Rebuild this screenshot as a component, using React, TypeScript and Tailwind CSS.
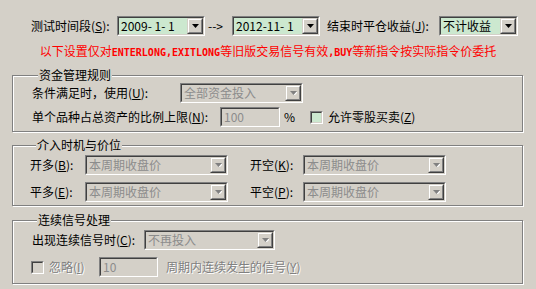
import React from 'react';

const FACE = 'bg-[#d4d0c8]';

// Win2000-style underlined access key inside parentheses
const Key: React.FC<{ k: string }> = ({ k }) => (
  <span>
    (<span className="underline underline-offset-1">{k}</span>)
  </span>
);

// half-width latin in the red notice: 6px per glyph like the bitmap font
const Asc: React.FC<{ children: React.ReactNode }> = ({ children }) => (
  <span className="font-['DejaVu_Sans_Mono',monospace] text-[10px] font-bold">{children}</span>
);

const Arrow: React.FC<{ disabled?: boolean }> = ({ disabled }) => (
  <div
    className={`flex h-full w-[16px] shrink-0 items-center justify-center border border-t-[#d4d0c8] border-l-[#d4d0c8] border-b-[#404040] border-r-[#404040] ${FACE}`}
  >
    <div className="flex h-full w-full items-center justify-center border border-t-white border-l-white border-b-[#808080] border-r-[#808080]">
      <svg width="7" height="4" viewBox="0 0 7 4">
        {disabled && <path d="M1 1h7L4.5 4.5z" fill="#fff" />}
        <path d="M0 0h7L3.5 4z" fill={disabled ? '#808080' : '#000'} />
      </svg>
    </div>
  </div>
);

const Sunken: React.FC<{ className?: string; children?: React.ReactNode; bg: string }> = ({
  className = '',
  children,
  bg,
}) => (
  <div
    className={`flex h-[20px] shrink-0 border border-t-[#808080] border-l-[#808080] border-b-white border-r-white ${className}`}
  >
    <div
      className={`flex flex-1 items-center border border-t-[#404040] border-l-[#404040] border-b-[#d4d0c8] border-r-[#d4d0c8] ${bg}`}
    >
      {children}
    </div>
  </div>
);

const Combo: React.FC<{ className?: string; value: string; disabled?: boolean }> = ({
  className,
  value,
  disabled,
}) => (
  <Sunken className={className} bg={disabled ? FACE : 'bg-[#cce8cf]'}>
    <span
      className={`flex-1 whitespace-pre pl-[2px] leading-[16px] ${disabled ? 'text-[#8c8c8c]' : 'text-black'}`}
    >
      {value}
    </span>
    <Arrow disabled={disabled} />
  </Sunken>
);

const Edit: React.FC<{ className?: string; value: string }> = ({ className, value }) => (
  <Sunken className={className} bg={FACE}>
    <span className="pl-[2px] leading-[16px] text-[#8c8c8c]">{value}</span>
  </Sunken>
);

const Check: React.FC<{ green?: boolean }> = ({ green }) => (
  <div className="h-[13px] w-[13px] shrink-0 border border-t-[#808080] border-l-[#808080] border-b-white border-r-white">
    <div
      className={`h-full w-full border border-t-[#404040] border-l-[#404040] border-b-[#d4d0c8] border-r-[#d4d0c8] ${
        green ? 'bg-[#cce8cf]' : FACE
      }`}
    />
  </div>
);

const Group: React.FC<{ title: string; className?: string; children: React.ReactNode }> = ({
  title,
  className = '',
  children,
}) => (
  <fieldset
    className={`mx-[12px] w-[511px] border border-[#808080] shadow-[1px_1px_0_#fff,inset_1px_1px_0_#fff] ${className}`}
  >
    <legend className={`ml-[6px] px-[1px] leading-[12px] ${FACE}`}>{title}</legend>
    {children}
  </fieldset>
);

const Etched = 'text-[#808080] [text-shadow:1px_1px_0_#fff]';

export default function App() {
  return (
    <div
      className={`h-[289px] w-[536px] overflow-hidden ${FACE} font-['Noto_Sans_CJK_SC',sans-serif] text-[12px] leading-[12px] text-black`}
    >
      <div className="mt-[16px] flex h-[20px] items-center pl-[31px]">
        <span className="w-[86px]">
          测试时间段<Key k="S" />:
        </span>
        <Combo className="w-[88px]" value="2009- 1- 1" />
        <span className="w-[27px] pl-[3px]">--&gt;</span>
        <Combo className="w-[88px]" value="2012-11- 1" />
        <span className="w-[119px] pl-[7px]">
          结束时平仓收益<Key k="J" />:
        </span>
        <Combo className="w-[79px]" value="不计收益" />
      </div>

      <div className="mt-[9px] text-center text-[#ff0000]">
        以下设置仅对<Asc>ENTERLONG,EXITLONG</Asc>等旧版交易信号有效<Asc>,BUY</Asc>
        等新指令按实际指令价委托
      </div>

      <Group title="资金管理规则" className="mt-[10px] pb-[4px] pl-[19px] pt-[2px]">
        <div className="flex items-center">
          <span className="w-[148px]">
            条件满足时，使用<Key k="U" />:
          </span>
          <Combo className="w-[123px]" value="全部资金投入" disabled />
        </div>
        <div className="mt-[4px] flex items-center">
          <span className="w-[188px]">
            单个品种占总资产的比例上限<Key k="N" />:
          </span>
          <Edit className="w-[60px]" value="100" />
          <span className="w-[30px] pl-[4px]">%</span>
          <Check green />
          <span className="pl-[5px]">
            允许零股买卖<Key k="Z" />
          </span>
        </div>
      </Group>

      <Group title="介入时机与价位" className="mt-[7px] pb-[3px] pl-[17px] pt-[4px]">
        <div className="flex items-center">
          <span className="w-[55px]">
            开多<Key k="B" />:
          </span>
          <Combo className="w-[143px]" value="本周期收盘价" disabled />
          <span className="ml-[22px] w-[53px]">
            开空<Key k="K" />:
          </span>
          <Combo className="w-[143px]" value="本周期收盘价" disabled />
        </div>
        <div className="mt-[7px] flex items-center">
          <span className="w-[55px]">
            平多<Key k="E" />:
          </span>
          <Combo className="w-[143px]" value="本周期收盘价" disabled />
          <span className="ml-[22px] w-[53px]">
            平空<Key k="P" />:
          </span>
          <Combo className="w-[143px]" value="本周期收盘价" disabled />
        </div>
      </Group>

      <Group title="连续信号处理" className="mt-[8px] pb-[6px] pl-[18px] pt-[4px]">
        <div className="flex items-center pl-[1px]">
          <span className="w-[112px]">
            出现连续信号时<Key k="C" />:
          </span>
          <Combo className="w-[131px]" value="不再投入" disabled />
        </div>
        <div className="mt-[7px] flex items-center">
          <Check />
          <span className={`w-[55px] pl-[5px] ${Etched}`}>
            忽略<Key k="I" />
          </span>
          <Edit className="w-[59px]" value="10" />
          <span className={`pl-[8px] ${Etched}`}>
            周期内连续发生的信号<Key k="Y" />
          </span>
        </div>
      </Group>

      <div className="mt-[5px] h-[1px] w-full bg-[#808080]" />
    </div>
  );
}
